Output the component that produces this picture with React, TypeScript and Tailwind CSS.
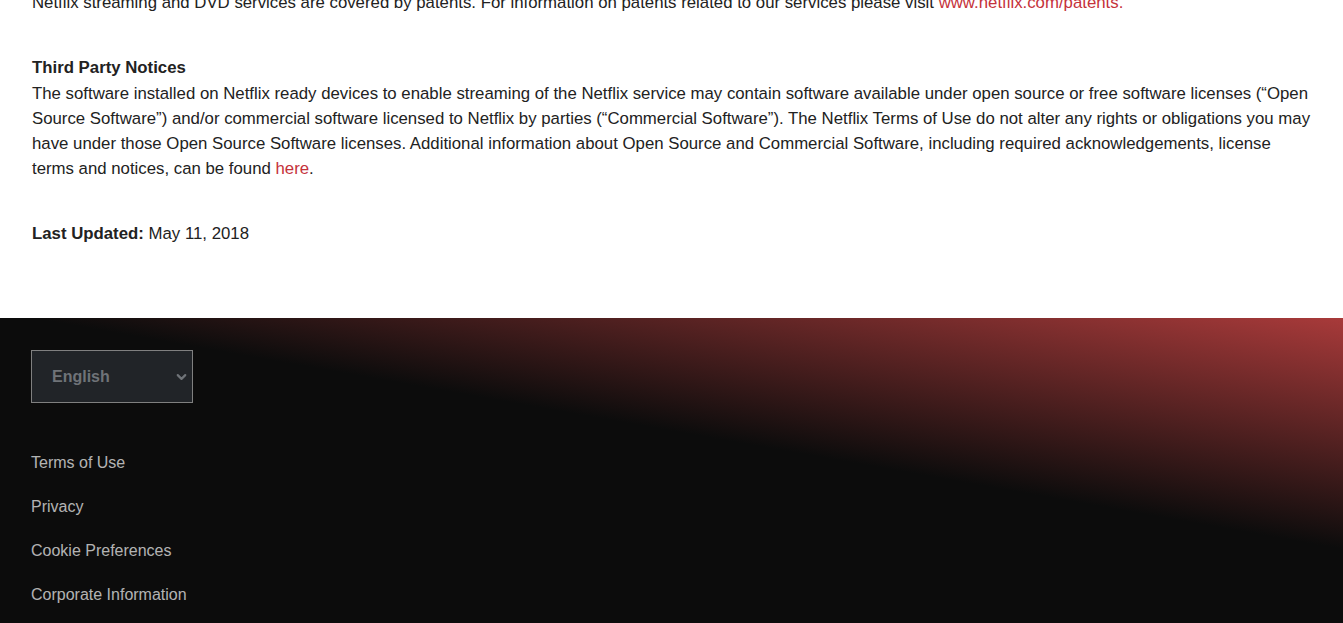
import { ChevronDown } from "lucide-react";

const FOOTER_LINKS = [
  "Terms of Use",
  "Privacy",
  "Cookie Preferences",
  "Corporate Information",
];

export default function App() {
  return (
    <div className="min-h-screen overflow-hidden bg-white font-['Liberation_Sans',Arial,sans-serif]">
      {/* ---- legal text (page is scrolled, first line partly cut) ---- */}
      <main className="-mt-[10px] px-8 pb-[72px] text-[16.8px] leading-[25px] text-[#222]">
        <p>
          Netflix streaming and DVD services are covered by patents. For
          information on patents related to our services please visit{" "}
          <a href="#" className="text-[#c5323b]">
            www.netflix.com/patents.
          </a>
        </p>

        <section className="mt-10">
          <h3 className="font-bold">Third Party Notices</h3>
          <p className="mt-px">
            The software installed on Netflix ready devices to enable streaming
            of the Netflix service may contain software available under open
            source or free software licenses (&ldquo;Open Source Software&rdquo;)
            and/or commercial software licensed to Netflix by parties
            (&ldquo;Commercial Software&rdquo;). The Netflix Terms of Use do not
            alter any rights or obligations you may have under those Open Source
            Software licenses. Additional information about Open Source and
            Commercial Software, including required acknowledgements, license
            terms and notices, can be found{" "}
            <a href="#" className="text-[#c5323b]">
              here
            </a>
            .
          </p>
        </section>

        <p className="mt-10">
          <span className="font-bold">Last Updated:</span> May 11, 2018
        </p>
      </main>

      {/* ---- footer ---- */}
      <footer className="h-[420px] bg-[linear-gradient(10deg,#0c0c0c_64.8%,#a83a3a_100%)] px-[31px] pt-8">
        <div className="relative h-[53px] w-[162px] border border-[#808080] bg-[#212428]">
          <select
            defaultValue="en"
            className="h-full w-full appearance-none bg-transparent pl-5 pr-8 text-base font-bold text-[#6f7378] outline-none"
          >
            <option value="en">English</option>
            <option value="es">Español</option>
          </select>
          <ChevronDown
            size={15}
            strokeWidth={3.5}
            className="pointer-events-none absolute right-[3px] top-1/2 -translate-y-1/2 text-[#6f7378]"
          />
        </div>

        <ul className="mt-[47px] flex flex-col gap-[19px] text-base leading-[25px] text-[rgba(255,255,255,0.7)]">
          {FOOTER_LINKS.map((label) => (
            <li key={label}>
              <a href="#">{label}</a>
            </li>
          ))}
        </ul>
      </footer>
    </div>
  );
}
